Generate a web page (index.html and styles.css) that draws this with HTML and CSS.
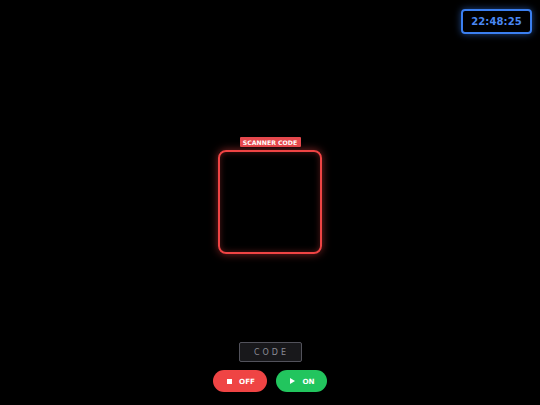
FILE: index.html
```html
<!DOCTYPE html>
<html>
<head>
<meta charset="utf-8">
<link rel="stylesheet" href="styles.css">
</head>
<body>
<div class="app">
  <div class="clock">22:48:25</div>
  <div class="stage">
    <div class="scanner">
      <div class="label">SCANNER CODE</div>
      <div class="frame"></div>
    </div>
  </div>
  <div class="controls">
    <div class="code">CODE</div>
    <div class="buttons">
      <button class="btn off"><span class="sq"></span>OFF</button>
      <button class="btn on"><span class="tri"></span>ON</button>
    </div>
  </div>
</div>
</body>
</html>
```
FILE: styles.css
```css
html, body { margin: 0; padding: 0; background: #000; }
body { font-family: "DejaVu Sans", sans-serif; }
.app {
  position: relative;
  width: 540px;
  height: 405px;
  display: flex;
  flex-direction: column;
  align-items: center;
  box-sizing: border-box;
  padding-bottom: 13px;
}
.clock {
  position: absolute;
  top: 9px;
  right: 8px;
  width: 71px;
  height: 25px;
  box-sizing: border-box;
  border: 2px solid #3b7ff0;
  border-radius: 4px;
  box-shadow: 0 0 7px rgba(59,130,246,.55);
  color: #4a88f2;
  font-weight: bold;
  font-size: 10px;
  display: flex;
  align-items: center;
  justify-content: center;
  letter-spacing: 0.1px;
}
.stage {
  flex: 1;
  width: 100%;
  display: flex;
  align-items: center;
  justify-content: center;
  box-sizing: border-box;
  padding-top: 49px;
}
.scanner {
  display: flex;
  flex-direction: column;
  align-items: center;
  gap: 3px;
}
.label {
  height: 10px;
  width: 61px;
  background: #e5484d;
  color: #fff;
  font-size: 6.2px;
  font-weight: bold;
  display: flex;
  align-items: center;
  justify-content: center;
  border-radius: 1px;
}
.frame {
  width: 104px;
  height: 104px;
  box-sizing: border-box;
  border: 2px solid #ef4444;
  border-radius: 8px;
  box-shadow: 0 0 8px rgba(239,68,68,.55), inset 0 0 6px rgba(239,68,68,.35);
}
.controls {
  display: flex;
  flex-direction: column;
  align-items: center;
  gap: 8px;
}
.code {
  width: 63px;
  height: 20px;
  box-sizing: border-box;
  background: #18181b;
  border: 1px solid #52525b;
  border-radius: 2px;
  color: #8a8a93;
  font-size: 8px;
  letter-spacing: 3px;
  padding-left: 3px;
  display: flex;
  align-items: center;
  justify-content: center;
}
.buttons {
  display: flex;
  gap: 9px;
}
.btn {
  height: 22px;
  border: none;
  border-radius: 11px;
  color: #fff;
  font-family: "DejaVu Sans", sans-serif;
  font-weight: bold;
  font-size: 7.2px;
  display: flex;
  align-items: center;
  justify-content: center;
  gap: 7px;
  padding: 0 0 0 2px;
}
.off { width: 54px; background: #ef4444; }
.on { width: 51px; background: #22c55e; }
.sq { width: 5px; height: 5px; background: #fff; }
.tri {
  width: 0; height: 0;
  border-top: 3px solid transparent;
  border-bottom: 3px solid transparent;
  border-left: 5px solid #fff;
}
```
